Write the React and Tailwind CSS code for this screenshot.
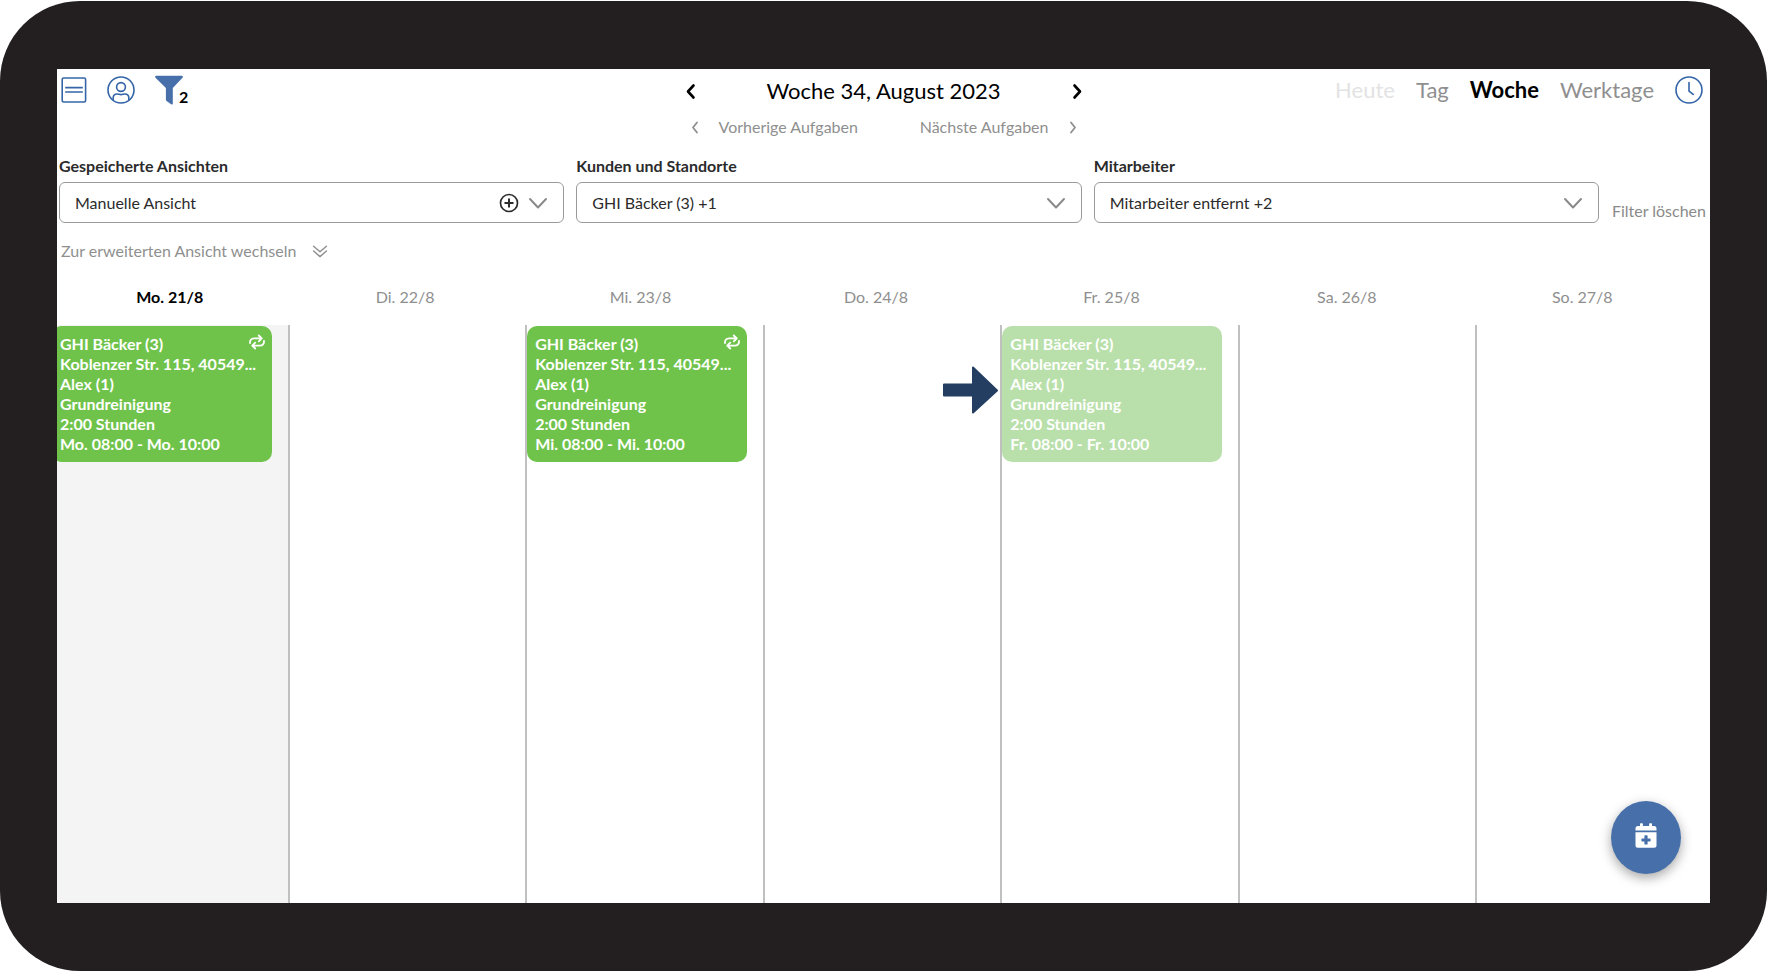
import React from 'react'
import clsx from 'clsx'

const savedViews = ['Manuelle Ansicht']
const customers = ['GHI Bäcker (3) +1']
const employees = ['Mitarbeiter entfernt +2']

const days = [
  { label: 'Mo. 21/8', today: true, event: { time: 'Mo. 08:00 - Mo. 10:00', repeats: true } },
  { label: 'Di. 22/8' },
  { label: 'Mi. 23/8', event: { time: 'Mi. 08:00 - Mi. 10:00', repeats: true } },
  { label: 'Do. 24/8', arrow: true },
  { label: 'Fr. 25/8', event: { time: 'Fr. 08:00 - Fr. 10:00', faded: true } },
  { label: 'Sa. 26/8' },
  { label: 'So. 27/8' },
]

const Chevron = ({ d, className, strokeWidth = 2 }) => (
  <svg className={className} viewBox="0 0 20 20" fill="none" stroke="currentColor" strokeWidth={strokeWidth} strokeLinecap="round" strokeLinejoin="round">
    <path d={d} />
  </svg>
)

const ListIcon = () => (
  <svg className="w-[26px] h-[26px]" viewBox="0 0 26 26" fill="none" stroke="currentColor" strokeWidth="1.6">
    <rect x="1.2" y="1" width="23.4" height="24" rx="1.5" />
    <path d="M4.2 10.6h17.6M4.2 15h17.6" />
  </svg>
)

const UserIcon = () => (
  <svg className="w-7 h-7" viewBox="0 0 28 28" fill="none" stroke="currentColor" strokeWidth="1.6">
    <circle cx="14" cy="14" r="13" />
    <circle cx="14" cy="11" r="4.4" />
    <path d="M6.2 24.2v-2.400c0-2.400 1.800-3.800 4-3.800 1.500 0 2.200.6 3.800.6s2.300-.6 3.800-.6c2.200 0 4 1.400 4 3.800v2.400" />
  </svg>
)

const FilterIcon = () => (
  <svg className="w-7 h-[30px]" viewBox="0 0 28 30" fill="currentColor">
    <path d="M1.300.8h25.400c1 0 1.500 1.200.8 1.900L17.800 13v15.400c0 1-1 1.300-1.700.8l-4.500-3.200c-.5-.3-.7-.7-.7-1.200V13L.5 2.700C-.2 2 .3.8 1.300.8z" />
  </svg>
)

const ClockIcon = () => (
  <svg className="w-7 h-7" viewBox="0 0 28 28" fill="none" stroke="currentColor" strokeWidth="1.6" strokeLinecap="round">
    <circle cx="14" cy="14" r="13" />
    <path d="M14 6.500v8.500l4.200 3.400" />
  </svg>
)

const RepeatIcon = ({ className }) => (
  <svg className={className} viewBox="0 0 16 16" fill="none" stroke="currentColor" strokeWidth="1.8" strokeLinecap="round" strokeLinejoin="round">
    <path d="M1 9.200C.7 6.200 2.500 4.400 5 4.400h7.500M9.800 1.500l3 2.900-3 2.900" />
    <path d="M15 6.800c.3 3-1.500 4.800-4 4.800H3.500M6.200 8.700l-3 2.900 3 2.900" />
  </svg>
)

const CalendarPlusIcon = () => (
  <svg className="w-[22px] h-[25px]" viewBox="0 0 22 25" fill="currentColor">
    <path d="M.5 7.500V5.400c0-1.300 1-2.300 2.300-2.300H5V.9c0-.4.3-.7.7-.7h1.500c.4 0 .7.300.7.700v2.200h6.200V.9c0-.4.300-.7.700-.7h1.500c.4 0 .7.300.7.700v2.200h2.200c1.300 0 2.300 1 2.300 2.300v2.100z" />
    <path fillRule="evenodd" d="M.5 9.200h21v13.300c0 1.300-1 2.300-2.300 2.300H2.800c-1.300 0-2.300-1-2.300-2.300zM10 12.300c-.4 0-.6.3-.6.6v2.500H7c-.4 0-.6.3-.6.600v1.800c0 .4.300.600.600.600h2.400v2.600c0 .4.300.600.600.600h2c.4 0 .600-.300.600-.600v-2.600H15c.4 0 .600-.300.600-.600V16c0-.4-.300-.600-.600-.600h-2.400v-2.500c0-.4-.300-.600-.600-.600z" />
  </svg>
)

const FilterSelect = ({ id, label, options, addable }) => (
  <div className="flex-1 min-w-0">
    <label htmlFor={id} className="block text-base leading-6 font-bold text-[#2b2b2b]">{label}</label>
    <div className="relative mt-1">
      <select id={id} className="w-full h-[41px] appearance-none rounded-md border border-[#9a9a9a] bg-white pl-[15px] pr-20 text-base text-[#2b2b2b]">
        {options.map((option) => (
          <option key={option}>{option}</option>
        ))}
      </select>
      {addable && (
        <button type="button" aria-label="Ansicht hinzufügen" className="absolute right-[45px] top-[11px] text-[#2b2b2b]">
          <svg className="w-5 h-5" viewBox="0 0 20 20" fill="none" stroke="currentColor" strokeWidth="1.7">
            <circle cx="10" cy="10" r="8.500" />
            <path d="M10 5.500v9M5.500 10h9" strokeWidth="2" />
          </svg>
        </button>
      )}
      <Chevron className="absolute right-4 top-[11px] w-5 h-5 pointer-events-none text-[#8a8a8a]" d="M2 6l8 8.500L18 6" />
    </div>
  </div>
)

const EventCard = ({ event }) => (
  <button
    type="button"
    className={clsx(
      'relative mt-px block w-[220px] rounded-[10px] py-2 pl-2 text-left text-base leading-5 font-bold text-white',
      event.faded ? 'bg-[#b9e0ab]' : 'bg-[#6fc34b]'
    )}
  >
    <span className="block">GHI Bäcker (3)</span>
    <span className="block whitespace-nowrap">Koblenzer Str. 115, 40549...</span>
    <span className="block">Alex (1)</span>
    <span className="block">Grundreinigung</span>
    <span className="block">2:00 Stunden</span>
    <span className="block">{event.time}</span>
    {event.repeats && <RepeatIcon className="absolute right-[7px] top-2 w-4 h-4" />}
  </button>
)

const App = () => {
  return (
    <div className="flex min-h-screen flex-col bg-white pt-px font-['Lato',sans-serif]">
      {/* Device frame */}
      <div className="flex flex-1 flex-col rounded-[80px] bg-[#231f20] px-[57px] pt-[68px] pb-[68px]">
        <main className="relative flex flex-1 flex-col overflow-hidden bg-white">
          {/* Toolbar */}
          <header className="grid grid-cols-[1fr_auto_1fr] items-start">
            <div className="flex h-[42px] items-center gap-5 pl-1 text-[#3465a8]">
              <button type="button" aria-label="Listenansicht"><ListIcon /></button>
              <button type="button" aria-label="Profil"><UserIcon /></button>
              <button type="button" aria-label="Filter" className="flex items-end text-[#4770aa]">
                <FilterIcon />
                <span className="-mb-0.5 -ml-1 text-base leading-5 font-bold text-black">2</span>
              </button>
            </div>

            <div className="w-[414px]">
              <div className="flex h-11 items-center justify-between px-1 text-black">
                <button type="button" aria-label="Vorherige Woche">
                  <Chevron className="w-5 h-5" strokeWidth={2.6} d="M12.500 4.500L7 10.500l5.500 6" />
                </button>
                <h1 className="text-[22px] leading-7">Woche 34, August 2023</h1>
                <button type="button" aria-label="Nächste Woche">
                  <Chevron className="w-5 h-5" strokeWidth={2.6} d="M7.500 4.500l5.500 6-5.500 6" />
                </button>
              </div>
              <div className="flex items-center justify-between px-2 text-base leading-7 text-[#8f8f8f]">
                <button type="button" className="flex items-center gap-3.5">
                  <Chevron className="w-5 h-5" strokeWidth={1.8} d="M12 5.500L8 10.500l4 5" />
                  Vorherige Aufgaben
                </button>
                <button type="button" className="flex items-center gap-3.5">
                  Nächste Aufgaben
                  <Chevron className="w-5 h-5" strokeWidth={1.8} d="M8 5.500l4 5-4 5" />
                </button>
              </div>
            </div>

            <nav className="flex h-[42px] items-center justify-end gap-[21px] pr-[7px] text-[22px] leading-7 text-[#8f8f8f]">
              <button type="button" className="text-[#e3e3e3]">Heute</button>
              <button type="button">Tag</button>
              <button type="button" className="font-bold text-black">Woche</button>
              <button type="button">Werktage</button>
              <button type="button" aria-label="Uhrzeit" className="text-[#3465a8]"><ClockIcon /></button>
            </nav>
          </header>

          {/* Filters */}
          <div className="mt-[13px] flex items-end gap-3 pl-0.5 pr-1">
            <FilterSelect id="saved" label="Gespeicherte Ansichten" options={savedViews} addable />
            <FilterSelect id="customers" label="Kunden und Standorte" options={customers} />
            <FilterSelect id="employees" label="Mitarbeiter" options={employees} />
            <button type="button" className="w-[95px] whitespace-nowrap text-right text-base leading-6 text-[#8a8a8a]">Filter löschen</button>
          </div>

          <button type="button" className="mt-4 flex items-center gap-4 self-start pl-1 text-base leading-6 text-[#8f8f8f]">
            Zur erweiterten Ansicht wechseln
            <Chevron className="w-4 h-4" strokeWidth={1.8} d="M2 4l8 7 8-7M2 10l8 7 8-7" />
          </button>

          {/* Week */}
          <div className="mt-[22px] -ml-[5px] mr-2.5 grid grid-cols-7 text-center text-base leading-6 text-[#8f8f8f]">
            {days.map((day) => (
              <div key={day.label} className={clsx(day.today && 'font-bold text-black')}>{day.label}</div>
            ))}
          </div>
          <div className="mt-4 -ml-[5px] -mr-[5px] grid flex-1 grid-cols-7">
            {days.map((day) => (
              <div
                key={day.label}
                className={clsx('relative border-r-2 border-[#c0c0c0] last:border-r-0', day.today && 'bg-[#f4f4f4]')}
              >
                {day.event && <EventCard event={day.event} />}
                {day.arrow && (
                  <svg className="absolute right-0.5 top-[41px] w-14 h-12 text-[#243e62]" viewBox="0 0 56 48" fill="currentColor" stroke="currentColor" strokeWidth="2" strokeLinejoin="round">
                    <path d="M2 18.500h29V1.500L55 24.500 31 46.500v-17H2z" />
                  </svg>
                )}
              </div>
            ))}
          </div>

          <button
            type="button"
            aria-label="Termin hinzufügen"
            className="absolute right-[29px] bottom-[29px] flex h-[73px] w-[70px] items-center justify-center rounded-[50%] bg-[#4770aa] pb-1 text-white shadow-[0_4px_12px_rgba(0,0,0,0.35)]"
          >
            <CalendarPlusIcon />
          </button>
        </main>
      </div>
    </div>
  )
}

export default App
